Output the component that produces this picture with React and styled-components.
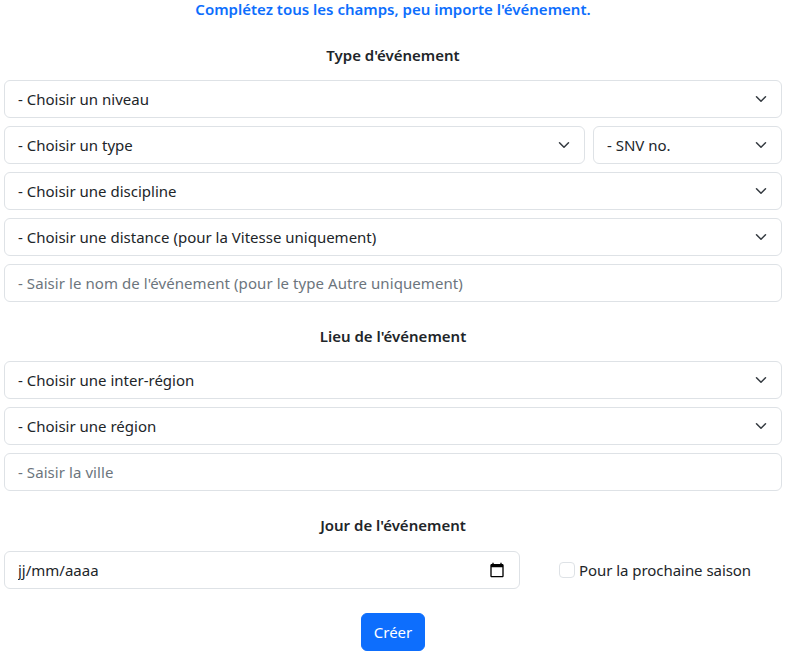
import React from 'react';
import styled, { createGlobalStyle } from 'styled-components';

const GlobalStyle = createGlobalStyle`
  html, body {
    margin: 0;
    padding: 0;
    background: #fff;
  }
  body {
    font-family: "Noto Sans", "Open Sans", sans-serif;
    font-size: 15px;
    color: #212529;
  }
`;

const Chevron = () => (
  <ChevronIcon viewBox="0 0 16 16" fill="none">
    <path d="m2 5 6 6 6-6" stroke="#343a40" strokeWidth="2" strokeLinecap="round" strokeLinejoin="round" />
  </ChevronIcon>
);

const Select = ({ label, grow }) => (
  <SelectWrap $grow={grow}>
    <SelectBox defaultValue="">
      <option value="">{label}</option>
    </SelectBox>
    <Chevron />
  </SelectWrap>
);

const App = () => (
  <Page>
    <GlobalStyle />
    <Intro>Complétez tous les champs, peu importe l'événement.</Intro>

    <SectionTitle>Type d'événement</SectionTitle>
    <Stack>
      <Select label="- Choisir un niveau" />
      <Row>
        <Select label="- Choisir un type" grow />
        <SmallCol>
          <Select label="- SNV no." />
        </SmallCol>
      </Row>
      <Select label="- Choisir une discipline" />
      <Select label="- Choisir une distance (pour la Vitesse uniquement)" />
      <TextField placeholder="- Saisir le nom de l'événement (pour le type Autre uniquement)" />
    </Stack>

    <SectionTitle>Lieu de l'événement</SectionTitle>
    <Stack>
      <Select label="- Choisir une inter-région" />
      <Select label="- Choisir une région" />
      <TextField placeholder="- Saisir la ville" />
    </Stack>

    <SectionTitle>Jour de l'événement</SectionTitle>
    <DateRow>
      <DateWrap>
        <TextField defaultValue="jj/mm/aaaa" />
        <CalendarIcon viewBox="0 0 24 24">
          <path
            fill="#000"
            d="M20 3h-1V1h-2v2H7V1H5v2H4c-1.100 0-2 .9-2 2v16c0 1.100.9 2 2 2h16c1.100 0 2-.9 2-2V5c0-1.100-.9-2-2-2zm0 18H4V8h16v13z"
          />
        </CalendarIcon>
      </DateWrap>
      <CheckLabel>
        <CheckBox type="checkbox" />
        Pour la prochaine saison
      </CheckLabel>
    </DateRow>

    <Actions>
      <SubmitButton type="button">Créer</SubmitButton>
    </Actions>
  </Page>
);

export default App;

const Page = styled.div`
  box-sizing: border-box;
  width: 785px;
  height: 654px;
  padding: 0 3px 0 4px;
  overflow: hidden;
`;

const Intro = styled.p`
  margin: 0 0 27px;
  height: 19px;
  line-height: 19px;
  text-align: center;
  font-weight: 600;
  color: #0d6efd;
`;

const SectionTitle = styled.h5`
  margin: 25px 0 15px;
  height: 19px;
  line-height: 19px;
  font-size: 15px;
  font-weight: 600;
  text-align: center;
  color: #212529;
`;

const Stack = styled.div`
  display: flex;
  flex-direction: column;
  gap: 8px;
`;

const Row = styled.div`
  display: flex;
  gap: 8px;
`;

const SmallCol = styled.div`
  flex: 0 0 189px;
`;

const SelectWrap = styled.div`
  position: relative;
  flex: ${(p) => (p.$grow ? '1' : 'none')};
`;

const SelectBox = styled.select`
  display: block;
  box-sizing: border-box;
  width: 100%;
  height: 38px;
  padding: 0 36px 0 13px;
  appearance: none;
  background: #fff;
  border: 1px solid #dee2e6;
  border-radius: 6px;
  font: inherit;
  color: #212529;
`;

const ChevronIcon = styled.svg`
  position: absolute;
  top: 13px;
  right: 15px;
  width: 12px;
  height: 12px;
  pointer-events: none;
`;

const TextField = styled.input`
  display: block;
  box-sizing: border-box;
  width: 100%;
  height: 38px;
  padding: 0 13px;
  background: #fff;
  border: 1px solid #dee2e6;
  border-radius: 6px;
  font: inherit;
  color: #212529;

  &::placeholder {
    color: #6c757d;
    opacity: 1;
    letter-spacing: 0.07px;
  }
`;

const DateRow = styled.div`
  display: flex;
  align-items: center;
  margin-top: 16px;
`;

const DateWrap = styled.div`
  position: relative;
  flex: 0 0 516px;
`;

const CalendarIcon = styled.svg`
  position: absolute;
  top: 11px;
  right: 15px;
  width: 16px;
  height: 16px;
  pointer-events: none;
`;

const CheckLabel = styled.label`
  display: flex;
  align-items: center;
  gap: 4px;
  margin-left: 39px;
  letter-spacing: -0.05px;
  color: #212529;
`;

const CheckBox = styled.input`
  appearance: none;
  box-sizing: border-box;
  width: 16px;
  height: 16px;
  margin: 0;
  background: #fff;
  border: 1px solid #dee2e6;
  border-radius: 4px;
`;

const Actions = styled.div`
  display: flex;
  justify-content: center;
  margin-top: 24px;
`;

const SubmitButton = styled.button`
  width: 64px;
  height: 38px;
  padding: 0;
  background: #0d6efd;
  border: 1px solid #0d6efd;
  border-radius: 6px;
  font: inherit;
  color: #fff;
`;
